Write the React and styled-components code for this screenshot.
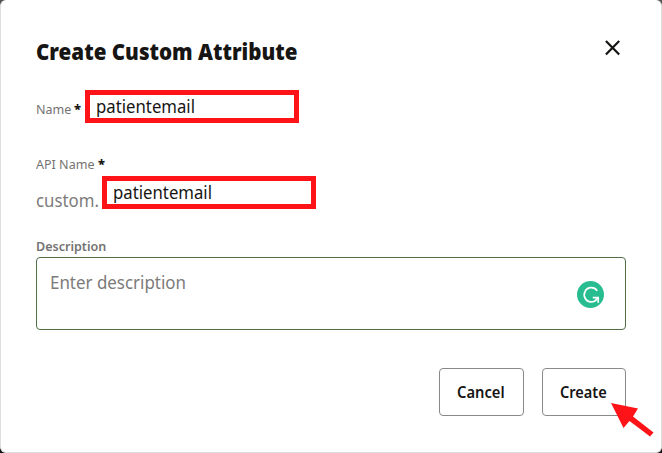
import React from "react";
import styled, { createGlobalStyle } from "styled-components";

const GlobalStyle = createGlobalStyle`
  * { box-sizing: border-box; }
  html { background: linear-gradient(#555, #111); }
  body { margin: 0; overflow: hidden; font-family: "Noto Sans", "Open Sans", sans-serif; color: #161513; }
`;

const Dialog = styled.section`
  position: relative;
  width: 662px;
  height: 453px;
  padding: 36px 35px 0;
  display: flex;
  flex-direction: column;
  background: #fff;
  border: 1px solid #dedede;
  border-top-color: #fff;
  border-radius: 6px;
`;

const Header = styled.header`
  display: flex;
  justify-content: space-between;
  height: 53px;
`;

const Title = styled.h1`
  margin: -1px 0 0;
  font-size: 22px;
  line-height: 30px;
  font-weight: 900;
  white-space: nowrap;
  transform: scaleX(${(p) => p.$fit});
  transform-origin: left;
`;

const CloseButton = styled.button`
  width: 16px;
  height: 16px;
  margin: 3px 5px 0 0;
  padding: 0;
  border: 0;
  background: none;
  svg { display: block; }
`;

const Text = styled.span`
  display: block;
  white-space: nowrap;
  transform: scaleX(${(p) => p.$fit || 1});
  transform-origin: left;
`;

const Label = styled(Text)`
  font-size: 13px;
  line-height: 18px;
  font-weight: ${(p) => (p.$strong ? 600 : 400)};
  color: #747372;
`;

const Required = styled.span`
  font-size: 13px;
  line-height: 18px;
  font-weight: 800;
  color: #161513;
`;

const NameRow = styled.div`
  display: flex;
  height: 65px;
`;

const LabelGroup = styled.div`
  display: flex;
  width: ${(p) => p.$width}px;
  height: 18px;
  margin-top: ${(p) => p.$top || 0}px;
  justify-content: space-between;
`;

const LabelSlot = styled.span`
  width: ${(p) => p.$width}px;
`;

const Highlighted = styled.div`
  width: 214px;
  height: 33px;
  margin-left: ${(p) => p.$left}px;
  padding-left: 6px;
  border: 5px solid #fd1318;
  font-size: 18px;
  line-height: 23px;
`;

const ApiRow = styled.div`
  display: flex;
  height: 61px;
  margin-top: 3px;
`;

const Prefix = styled.div`
  width: 63px;
  padding-top: 12px;
  font-size: 18px;
  line-height: 24px;
  color: #7c7b7a;
`;

const Description = styled.div`
  display: flex;
  justify-content: space-between;
  height: 73px;
  margin-top: 2px;
  padding: 12px 21px 0 13px;
  border: 1px solid #507047;
  border-radius: 4px;
  font-size: 18px;
  line-height: 25px;
  color: #7c7b7a;
`;

const Assistant = styled.span`
  width: 27px;
  height: 27px;
  margin-top: 11px;
  svg { display: block; }
`;

const Actions = styled.footer`
  display: flex;
  justify-content: flex-end;
  gap: 18px;
  margin-top: 38px;
`;

const Button = styled.button`
  width: ${(p) => p.$width}px;
  height: 48px;
  padding: 0 0 0 17px;
  border: 1px solid #8a8988;
  border-radius: 4px;
  background: #fff;
  color: #161513;
  font: 600 16px/22px "Noto Sans", sans-serif;
  text-align: left;
`;

const Pointer = styled.svg`
  position: absolute;
  left: 609px;
  top: 401px;
`;

export default function App() {
  return (
    <>
      <GlobalStyle />
      <Dialog>
        <Header>
          <Title $fit={0.936}>Create Custom Attribute</Title>
          <CloseButton aria-label="Close">
            <svg width="16" height="16" viewBox="0 0 16 16" stroke="#161513" strokeWidth="2.2" fill="none">
              <path d="M0.9 1 14.2 14.4M14.2 1 0.9 14.4" />
            </svg>
          </CloseButton>
        </Header>
        <NameRow>
          <LabelGroup $width={45} $top={10}>
            <LabelSlot $width={35}><Label $fit={0.965}>Name</Label></LabelSlot>
            <Required>*</Required>
          </LabelGroup>
          <Highlighted $left={4}><Text $fit={0.93}>patientemail</Text></Highlighted>
        </NameRow>
        <LabelGroup $width={69}>
          <LabelSlot $width={59}><Label $fit={0.965}>API Name</Label></LabelSlot>
          <Required>*</Required>
        </LabelGroup>
        <ApiRow>
          <Prefix><Text $fit={0.935}>custom.</Text></Prefix>
          <Highlighted $left={3}><Text $fit={0.93}>patientemail</Text></Highlighted>
        </ApiRow>
        <Label $strong $fit={0.965}>Description</Label>
        <Description>
          <Text $fit={0.94}>Enter description</Text>
          <Assistant>
            <svg width="27" height="27" viewBox="0 0 27 27" fill="none">
              <circle cx="13.5" cy="13.5" r="13.5" fill="#27bd91" />
              <path d="M20.2 9.8A7.1 7.1 0 1 0 14 20.9C17 20.9 19 19.8 20.6 16.8" stroke="#fff" strokeWidth="1.7" />
              <path d="M15.8 16.6H21.2V21.8" stroke="#fff" strokeWidth="1.7" />
            </svg>
          </Assistant>
        </Description>
        <Actions>
          <Button $width={85}><Text $fit={0.92}>Cancel</Text></Button>
          <Button $width={84}><Text $fit={0.91}>Create</Text></Button>
        </Actions>
        <Pointer width="46" height="38" viewBox="610 402 46 38">
          <path d="M611 403 638 408.5 633 416.5 653.5 432.5 650 436.5 629.5 421 623.5 428Z" fill="#fd1318" />
        </Pointer>
      </Dialog>
    </>
  );
}
